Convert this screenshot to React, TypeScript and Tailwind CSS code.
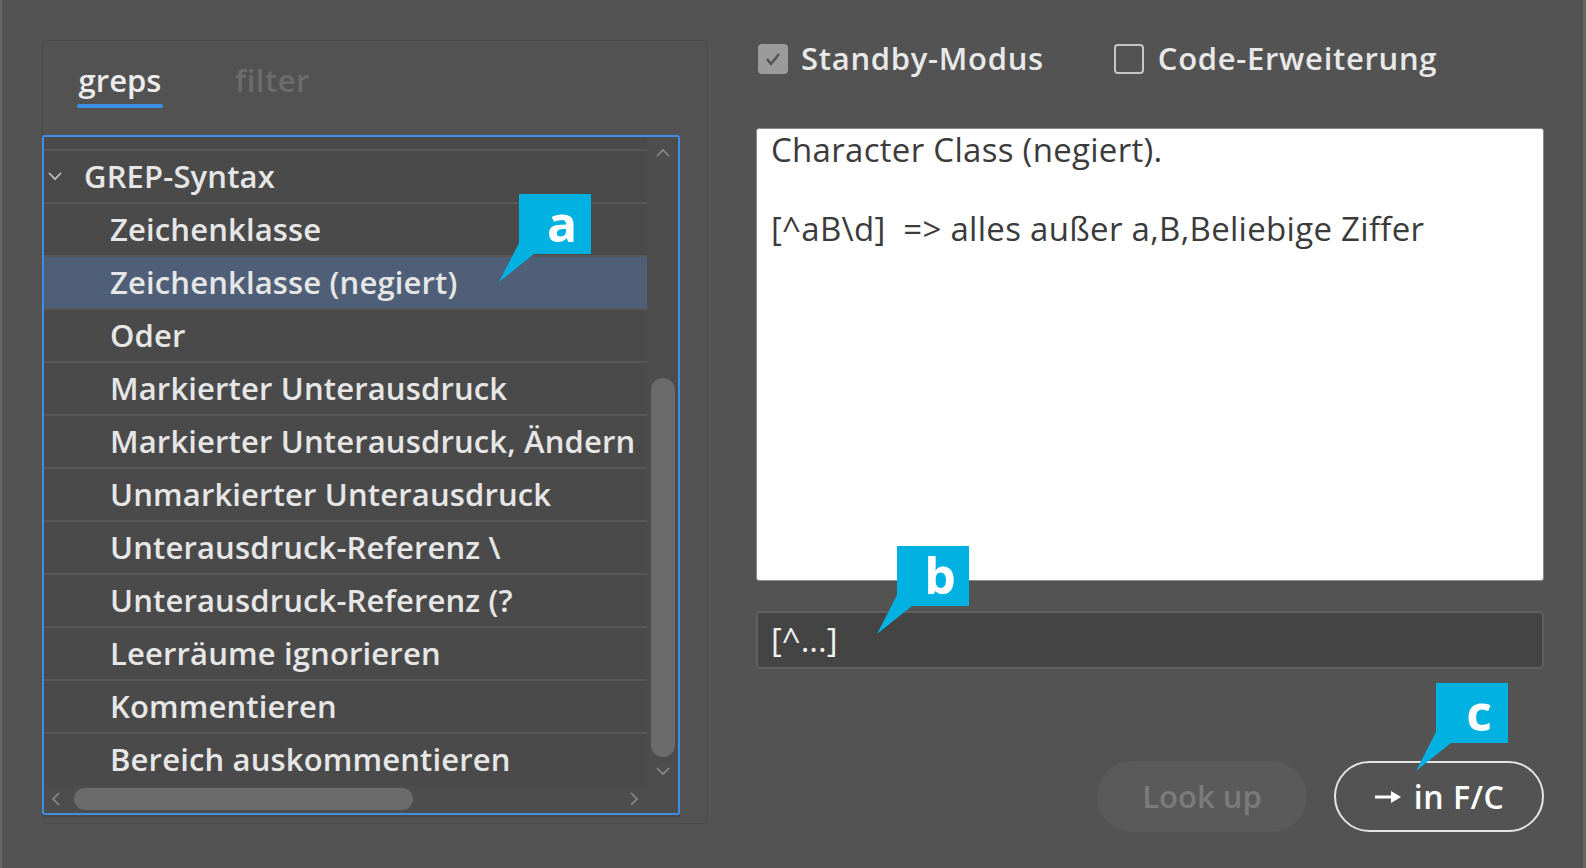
import React from 'react';

const items = [
  'Zeichenklasse',
  'Zeichenklasse (negiert)',
  'Oder',
  'Markierter Unterausdruck',
  'Markierter Unterausdruck, Ändern',
  'Unmarkierter Unterausdruck',
  'Unterausdruck-Referenz \\',
  'Unterausdruck-Referenz (?',
  'Leerräume ignorieren',
  'Kommentieren',
  'Bereich auskommentieren',
];

const Callout: React.FC<{ x: number; y: number; letter: string }> = ({ x, y, letter }) => (
  <div className="absolute w-[92px] h-[90px]" style={{ left: x - 20, top: y }}>
    <svg width="92" height="90" viewBox="0 0 92 90" className="absolute left-0 top-0">
      <polygon points="20,0 92,0 92,60 35,60 0,88 20,49" fill="#00b1e2" />
    </svg>
    <div className="absolute left-[20px] top-0 w-[72px] h-[60px] flex justify-center pl-[14px] pt-[4px] text-[50px] leading-none font-bold text-white">
      {letter}
    </div>
  </div>
);

const Chevron: React.FC<{ dir: 'up' | 'down' | 'left' | 'right'; color?: string }> = ({ dir, color = '#8c8c8c' }) => {
  const pts = {
    up: '2,9 8,3 14,9',
    down: '2,3 8,9 14,3',
    left: '9,2 3,8 9,14',
    right: '3,2 9,8 3,14',
  }[dir];
  const vertical = dir === 'up' || dir === 'down';
  return (
    <svg width={vertical ? 16 : 12} height={vertical ? 12 : 16} viewBox={vertical ? '0 0 16 12' : '0 0 12 16'}>
      <polyline points={pts} fill="none" stroke={color} strokeWidth="1.6" />
    </svg>
  );
};

export default function App() {
  return (
    <div className="relative w-[1586px] h-[868px] bg-[#535353] border-l-2 border-r-[3px] border-[#666666] overflow-hidden font-['Open_Sans',sans-serif] text-[#e8e8e8]">
      <div className="flex pl-[40px] pt-[40px]">
        {/* left panel */}
        <div className="w-[666px] h-[784px] rounded-[5px] border border-[#4a4a4a] bg-[#525252] flex flex-col">
          <div className="h-[94px] flex gap-[72px] pl-[34px] pt-[18px] text-[31px] font-semibold">
            <div className="flex flex-col items-center">
              <span className="leading-[42px] text-[#ececec]">greps</span>
              <span className="mt-[3px] h-[4px] w-[86px] rounded-sm bg-[#3d8ee6]" />
            </div>
            <span className="leading-[42px] tracking-[0.5px] text-[#6c6c6c]">filter</span>
          </div>

          <div className="w-[638px] h-[680px] border-2 border-[#3f8ee2] rounded-[3px] bg-[#4a4a4a] flex flex-col shadow-[0_3px_0_#4a4a4a] -ml-px">
            <div className="flex flex-1 min-h-0">
              <div className="flex-1 flex flex-col overflow-hidden text-[31px] font-semibold tracking-[0.15px] text-[#e6e6e6]">
                <div className="h-[53px] -mt-[41.5px] shrink-0" />
                <div className="h-[53px] shrink-0 border-t-2 border-[#585858] flex items-center">
                  <span className="w-[40px] flex justify-center pr-[18px]">
                    <Chevron dir="down" color="#c8c8c8" />
                  </span>
                  <span>GREP-Syntax</span>
                </div>
                {items.map((t, i) => (
                  <div
                    key={t}
                    className={`h-[53px] shrink-0 border-t-2 border-[#585858] flex items-center pl-[66px] whitespace-nowrap ${
                      i === 1 ? 'bg-[#4f5f78]' : ''
                    }`}
                  >
                    {t}
                  </div>
                ))}
              </div>
              <div className="w-[31px] bg-[#4d4d4d] flex flex-col items-center pt-[10px] pb-[8px]">
                <Chevron dir="up" />
                <div className="flex-1 w-full flex flex-col items-center pt-[219px] pb-[8px]">
                  <div className="w-[24px] flex-1 rounded-full bg-[#6b6b6b]" />
                </div>
                <Chevron dir="down" />
              </div>
            </div>
            <div className="h-[28px] bg-[#4d4d4d] flex items-center pl-[6px] pr-[38px]">
              <Chevron dir="left" />
              <div className="ml-[12px] w-[339px] h-[22px] rounded-full bg-[#6b6b6b]" />
              <div className="flex-1" />
              <Chevron dir="right" />
            </div>
          </div>
        </div>

        {/* right column */}
        <div className="ml-[48px] w-[788px] flex flex-col">
          <div className="mt-[3px] h-[31px] flex items-center text-[31px] font-semibold tracking-[0.7px]">
            <span className="ml-[2px] w-[30px] h-[30px] rounded-[4px] bg-[#9b9b9b] flex items-center justify-center">
              <svg width="20" height="20" viewBox="0 0 20 20">
                <polyline points="4,10 8,15 16,5" fill="none" stroke="#555555" strokeWidth="2.6" />
              </svg>
            </span>
            <span className="ml-[13px] leading-none">Standby-Modus</span>
            <span className="ml-[70px] w-[30px] h-[30px] rounded-[4px] border-2 border-[#c6c6c6]" />
            <span className="ml-[14px] leading-none">Code-Erweiterung</span>
          </div>

          <div className="mt-[54px] h-[453px] bg-white rounded-[3px] border border-[#8a8a8a] px-[14px] pt-[1px] text-[33px] tracking-[0.3px] leading-[39.5px] text-[#3b3b3b] whitespace-pre">
            <div>Character Class (negiert).</div>
            <div>&nbsp;</div>
            <div>[^aB\d]  =&gt; alles außer a,B,Beliebige Ziffer</div>
          </div>

          <div className="mt-[30px] h-[58px] bg-[#444444] rounded-[4px] border-2 border-[#5f5f5f] flex items-center px-[13px] text-[33px] text-[#f0f0f0]">
            [^...]
          </div>

          <div className="mt-[92px] flex justify-end gap-[27px]">
            <div className="w-[210px] h-[71px] rounded-full bg-[#5a5a5a] flex items-center justify-center text-[31px] font-semibold text-[#7b7b7b]">
              Look up
            </div>
            <div className="w-[210px] h-[71px] rounded-full border-2 border-[#e4e4e4] flex items-center justify-center gap-[12px] text-[32px] font-semibold tracking-[0.5px] text-white">
              <svg width="28" height="16" viewBox="0 0 28 16">
                <line x1="1" y1="8" x2="20" y2="8" stroke="#ffffff" strokeWidth="3" />
                <polygon points="17,2 27,8 17,14" fill="#ffffff" />
              </svg>
              <span>in F/C</span>
            </div>
          </div>
        </div>
      </div>

      <Callout x={517} y={194} letter="a" />
      <Callout x={895} y={546} letter="b" />
      <Callout x={1434} y={683} letter="c" />
    </div>
  );
}
